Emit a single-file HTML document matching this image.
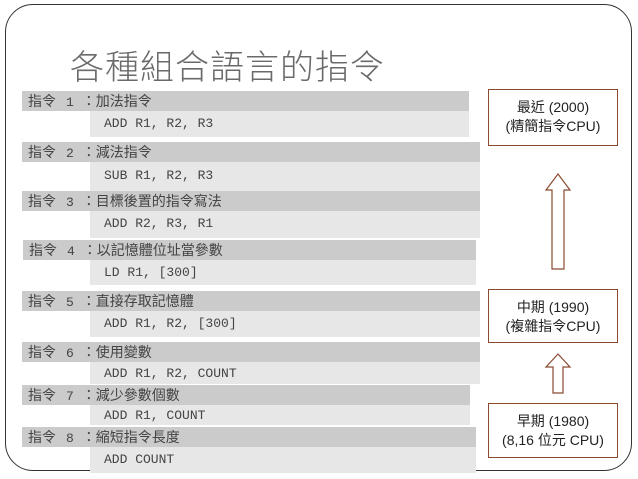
<!DOCTYPE html><html><head><meta charset="utf-8"><style>
body{margin:0;width:638px;height:479px;background:#fff;position:relative;overflow:hidden;font-family:"Liberation Sans","Noto Sans CJK TC",sans-serif}
.frame{position:absolute;left:5px;top:4px;width:625px;height:465px;border:1.5px solid #333;border-radius:28px}
.t{position:absolute;left:70px;top:46px;font-size:34px;font-weight:300;color:#6a6a6a;letter-spacing:1px;white-space:nowrap;line-height:44px}
.h{position:absolute;left:22px;height:20px;background:#cbcbcb;color:#444;font-size:14px;line-height:20px;white-space:nowrap;box-sizing:border-box}
.h span{font-family:"Liberation Mono",monospace;font-size:13px;margin:0 8px 0 10px}
.c{position:absolute;left:90px;background:#e7e7e7;color:#444;font-family:"Liberation Mono",monospace;font-size:13px;white-space:nowrap;padding-left:14px;box-sizing:border-box}
.b{position:absolute;left:488px;width:130px;border:1.5px solid #8a4a30;box-sizing:border-box;text-align:center;font-size:14px;color:#222;line-height:19px;padding-top:8px}
</style></head><body>
<div class="frame"></div>
<div class="t">各種組合語言的指令</div>

<div class="h" style="top:91px;width:447px;padding-left:6px">指令<span>1</span>：加法指令</div>
<div class="c" style="top:111px;height:26px;width:379px;line-height:26px">ADD R1, R2, R3</div>
<div class="h" style="top:142px;width:458px;padding-left:6px">指令<span>2</span>：減法指令</div>
<div class="c" style="top:162px;height:29px;width:390px;line-height:27px">SUB R1, R2, R3</div>
<div class="h" style="top:191px;width:458px;padding-left:6px">指令<span>3</span>：目標後置的指令寫法</div>
<div class="c" style="top:211px;height:27px;width:390px;line-height:25px">ADD R2, R3, R1</div>
<div class="h" style="top:240px;width:453px;left:23px;padding-left:6px">指令<span>4</span>：以記憶體位址當參數</div>
<div class="c" style="top:260px;height:25px;width:386px;line-height:25px">LD R1, [300]</div>
<div class="h" style="top:291px;width:458px;padding-left:6px">指令<span>5</span>：直接存取記憶體</div>
<div class="c" style="top:311px;height:26px;width:390px;line-height:26px">ADD R1, R2, [300]</div>
<div class="h" style="top:342px;width:458px;padding-left:6px">指令<span>6</span>：使用變數</div>
<div class="c" style="top:362px;height:22px;width:390px;line-height:24px">ADD R1, R2, COUNT</div>
<div class="h" style="top:385px;width:448px;padding-left:6px">指令<span>7</span>：減少參數個數</div>
<div class="c" style="top:405px;height:20px;width:380px;line-height:22px">ADD R1, COUNT</div>
<div class="h" style="top:427px;width:454px;padding-left:6px">指令<span>8</span>：縮短指令長度</div>
<div class="c" style="top:447px;height:26px;width:386px;line-height:26px">ADD COUNT</div>

<div class="b" style="top:89px;height:57px">最近 (2000)<br>(精簡指令CPU)</div>
<div class="b" style="top:289px;height:54px">中期 (1990)<br>(複雜指令CPU)</div>
<div class="b" style="top:403px;height:55px">早期 (1980)<br>(8,16 位元 CPU)</div>
<svg style="position:absolute;left:0;top:0" width="638" height="479">
<path d="M552 269 V190 H546 L558 174 L570 190 H564 V269 Z" fill="#fff" stroke="#8a4a30" stroke-width="1.2"/>
<path d="M553 393 V367 H546 L558 354 L570 367 H563 V393 Z" fill="#fff" stroke="#8a4a30" stroke-width="1.2"/>
</svg>
</body></html>
